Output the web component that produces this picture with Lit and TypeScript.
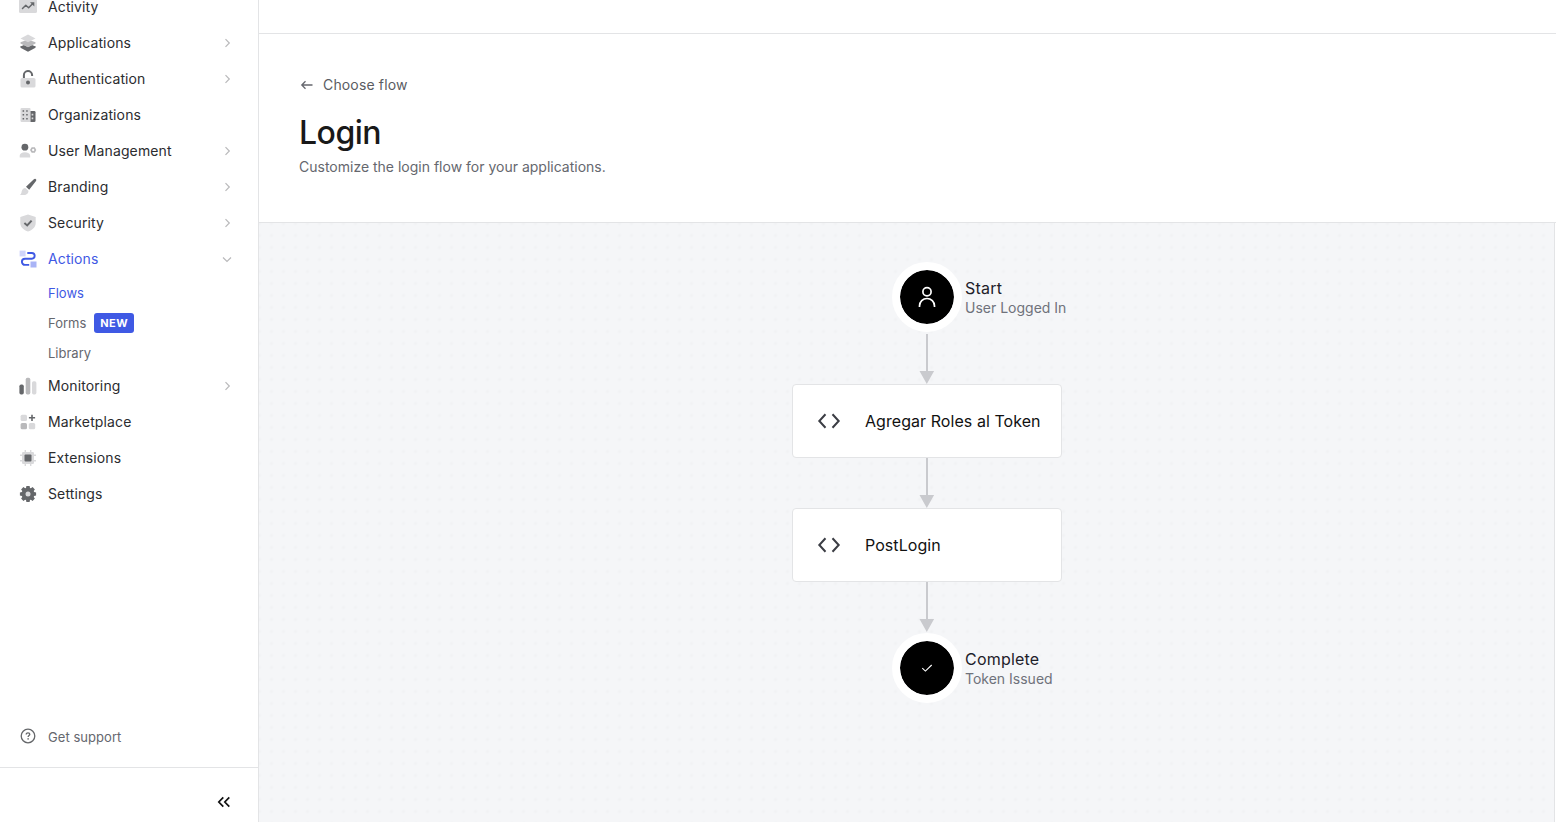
import { LitElement, html, svg, css, nothing } from "lit";
import { customElement } from "lit/decorators.js";
import { classMap } from "lit/directives/class-map.js";

const D = "#65676a", M = "#b9b9bb", L = "#d9d9db";

const icons: Record<string, unknown> = {
  activity: svg`<rect x="0" y="1.3" width="18" height="13.700" rx="1.6" fill="${L}"/>
    <path d="M3.5 10.500 6.8 7.300 9.6 9.800 13.6 5.800" fill="none" stroke="${D}" stroke-width="1.500" stroke-linejoin="round" stroke-linecap="round"/><path d="M11 4.200h4.300v4.300z" fill="${D}"/>`,
  applications: svg`<path d="M1.500 12.100 9 15.500l7.500-3.400v1.700L9 17.700 1.500 13.800z" fill="${D}"/><path d="M1.500 12.600 5 11l4 2 4-2 3.500 1.600L9 17z" fill="${D}"/>
    <path d="M1.500 8.200 9 5.500l7.500 2.700v1.200L9 13.200 1.500 9.400z" fill="${M}"/><path d="M9 .6 16.500 4.400 9 8.300 1.500 4.400z" fill="${L}"/>`,
  authentication: svg`<rect x="1.500" y="8" width="15" height="9.600" rx="1.600" fill="${L}"/><path d="M4.900 8V5.400a4.100 4.100 0 0 1 8.200-.4v1" fill="none" stroke="${D}" stroke-width="2"/><circle cx="9" cy="12.600" r="2" fill="${D}"/>`,
  organizations: svg`<path d="M2.800 2h7.700a1 1 0 0 1 1 1v13H2.800a1.300 1.300 0 0 1-1.300-1.300V3.300A1.300 1.300 0 0 1 2.800 2z" fill="${L}"/><path d="M11.500 5h3.700a1.300 1.300 0 0 1 1.300 1.300v8.400a1.300 1.300 0 0 1-1.300 1.300h-3.700z" fill="${D}"/>
    <path d="M3.600 4.300h1.500v1.500H3.600zM7.200 4.300h1.500v1.500H7.200zM3.600 8.100h1.500v1.500H3.600zM7.200 8.100h1.500v1.500H7.200zM3.600 11.900h1.500v1.500H3.600zM7.200 11.900h1.500v1.500H7.200z" fill="${D}"/><path d="M12.600 7.800h1.700v1.700h-1.700zM12.600 11.500h1.700v1.700h-1.700z" fill="${L}"/>`,
  users: svg`<circle cx="5.900" cy="5.200" r="3.400" fill="${D}"/><path d="M.7 13.800C.7 11.500 3 10.300 5.900 10.300s5.300 1.200 5.300 3.500v1.700H.7z" fill="${L}"/><circle cx="14.200" cy="8" r="1.900" fill="none" stroke="${M}" stroke-width="1.500"/><path d="M11.300 8h1M16.100 8h1M12.800 5.500l.5.900M15.600 5.500l-.5.900M12.800 10.500l.5-.9M15.600 10.500l-.5-.9" stroke="${M}" stroke-width="1.300"/>`,
  branding: svg`<path d="M16.500.9c.9.300 1 1.100.5 2.100l-6.800 8.700-3.200-2.900L14.600 1.500c.7-.6 1.300-.8 1.900-.6z" fill="${D}"/><path d="M6.300 9.900l3.100 2.900c.2 2.500-1.800 4.200-4.300 4.200H.8c1.700-1 1.500-2 1.900-3.700.4-1.900 1.800-3.200 3.600-3.400z" fill="${L}"/>`,
  security: svg`<path d="M9 .6 16.700 3v6c0 4.200-3.400 7.200-7.700 8.600C4.700 16.200 1.300 13.200 1.300 9V3z" fill="${L}"/><path d="M5.400 9.100 8.200 11.400 12.600 6.600" fill="none" stroke="${D}" stroke-width="2"/>`,
  actions: svg`<rect x=".6" y=".6" width="6" height="5.800" fill="#cfd4fa"/><rect x="11.500" y="11.500" width="6" height="6" fill="#a9b4f6"/><path d="M8.300 3h4.500a2.800 2.800 0 0 1 0 5.700H6a3.100 3.100 0 0 0 0 6.200h4.200" fill="none" stroke="#3f59e4" stroke-width="1.900"/>`,
  monitoring: svg`<rect x=".4" y="7.500" width="4.400" height="10" rx="1.700" fill="${D}"/><rect x="6.700" y=".7" width="4.600" height="16.800" rx="1.700" fill="${M}"/><rect x="13" y="4.200" width="4.400" height="13.300" rx="1.700" fill="${L}"/>`,
  marketplace: svg`<rect x="1.600" y="1.700" width="6.400" height="6.400" rx="1.500" fill="${L}"/><rect x="1.600" y="9.900" width="6.400" height="6.400" rx="1.500" fill="${M}"/><rect x="9.800" y="9.900" width="6.400" height="6.400" rx="1.500" fill="${L}"/><path d="M13 1.700v6.200M9.900 4.800h6.200" stroke="${D}" stroke-width="1.600"/>`,
  extensions: svg`<rect x="3" y="3" width="12" height="12" rx="1.300" fill="${L}"/><path d="M6.300 1v16M11.700 1v16M1 6.300h16M1 11.700h16" stroke="${L}" stroke-width="1.400"/><rect x="5.500" y="5.500" width="7" height="7" rx="1" fill="${D}"/>`,
  settings: svg`<path d="M7.400.9h3.200l.4 2 .9.400 1.700-1.200 2.300 2.300-1.200 1.700.4.900 2 .4v3.200l-2 .4-.4.900 1.200 1.700-2.300 2.300-1.700-1.200-.9.400-.4 2H7.400l-.4-2-.9-.4-1.700 1.200-2.300-2.300 1.200-1.700-.4-.9-2-.4V7.400l2-.4.4-.9-1.200-1.700 2.300-2.300 1.700 1.200.9-.4z" fill="${D}"/><circle cx="9" cy="9" r="2.500" fill="${L}"/>`,
  support: svg`<circle cx="9" cy="9" r="6.800" fill="none" stroke="${D}" stroke-width="1.300"/><path d="M7.200 7.400c0-1 .8-1.600 1.800-1.600s1.800.6 1.800 1.500c0 1.300-1.700 1.300-1.700 2.700" fill="none" stroke="${D}" stroke-width="1.300"/><circle cx="9.100" cy="11.900" r=".8" fill="${D}"/>`,
};

interface NavItem { icon: string; label: string; chevron?: boolean; open?: boolean; }

const topItems: NavItem[] = [
  { icon: "activity", label: "Activity" },
  { icon: "applications", label: "Applications", chevron: true },
  { icon: "authentication", label: "Authentication", chevron: true },
  { icon: "organizations", label: "Organizations" },
  { icon: "users", label: "User Management", chevron: true },
  { icon: "branding", label: "Branding", chevron: true },
  { icon: "security", label: "Security", chevron: true },
  { icon: "actions", label: "Actions", chevron: true, open: true },
];
const bottomItems: NavItem[] = [
  { icon: "monitoring", label: "Monitoring", chevron: true },
  { icon: "marketplace", label: "Marketplace" },
  { icon: "extensions", label: "Extensions" },
  { icon: "settings", label: "Settings" },
];

@customElement("side-nav")
export class SideNav extends LitElement {
  static styles = css`
    :host { display: flex; flex-direction: column; box-sizing: border-box; width: 259px; height: 100%; border-right: 1px solid #e3e4e6; background: #fff; color: #2b2c2f; font-size: 14px; }
    .nav { flex: 1; min-height: 0; margin-top: -11px; }
    .item { display: flex; align-items: center; height: 36px; padding: 0 22px 0 19px; letter-spacing: 0.12px; }
    .item svg { flex: none; }
    .label { flex: 1; margin-left: 11px; }
    .item .label { padding-bottom: 2px; }
    .open { color: #3f59e4; }
    .sub { display: grid; grid-template-rows: repeat(3, 1fr); height: 91px; padding-left: 48px; font-size: 13px; color: #65676e; }
    .subitem { display: flex; align-items: center; gap: 8px; padding-top: 1px; }
    .active { color: #3f59e4; }
    .badge { display: flex; align-items: center; height: 20px; box-sizing: border-box; padding: 0 6px; border-radius: 3px; background: #3f59e4; color: #fff; font-size: 11px; font-weight: 700; letter-spacing: 0.4px; }
    .support { display: flex; align-items: center; height: 36px; padding-left: 19px; margin-bottom: 13px; font-size: 13px; color: #65676e; letter-spacing: 0.05px; }
    .support .label { padding-top: 1px; }
    .foot { display: flex; align-items: center; justify-content: flex-end; box-sizing: border-box; height: 55px; padding: 14px 27px 0 0; border-top: 1px solid #e3e4e6; }
    .foot svg { display: block; }
  `;

  private item(i: NavItem) {
    return html`<div class=${classMap({ item: true, open: !!i.open })}>
      <svg width="18" height="18" viewBox="0 0 18 18">${icons[i.icon]}</svg>
      <span class="label">${i.label}</span>
      ${i.chevron
        ? html`<svg width="18" height="18" viewBox="0 0 18 18" fill="none" stroke="#b9b9bb" stroke-width="1.2">
            <path d=${i.open ? "M5 7.500 9 11.500 13 7.500" : "M7.500 5.200 11.300 9 7.500 12.800"} /></svg>`
        : nothing}
    </div>`;
  }

  render() {
    return html`
      <div class="nav">
        ${topItems.map((i) => this.item(i))}
        <div class="sub">
          <div class="subitem active">Flows</div>
          <div class="subitem">Forms <span class="badge">NEW</span></div>
          <div class="subitem">Library</div>
        </div>
        ${bottomItems.map((i) => this.item(i))}
      </div>
      <div class="support"><svg width="18" height="18" viewBox="0 0 18 18">${icons.support}</svg><span class="label">Get support</span></div>
      <div class="foot"><svg width="14" height="12" viewBox="0 0 14 12" fill="none" stroke="#111" stroke-width="1.700"><path d="M6.300 1.300 1.800 6l4.500 4.700M12.300 1.300 7.800 6l4.500 4.700" /></svg></div>
    `;
  }
}

@customElement("flow-canvas")
export class FlowCanvas extends LitElement {
  static styles = css`
    :host { display: flex; flex-direction: column; align-items: center; box-sizing: border-box; padding: 39px 0 0 41px; border-right: 1px solid #e3e4e6; background-color: #f5f6f8; background-image: radial-gradient(circle at 6px 6px, #f1f2f4 1.2px, transparent 2.1px); background-size: 12px 12px; background-position: 6.500px 6.500px; }
    .terminal { display: grid; grid-template-columns: 1fr 70px 1fr; align-items: center; width: 400px; height: 70px; }
    .disc { grid-column: 2; box-sizing: border-box; display: flex; align-items: center; justify-content: center; width: 70px; height: 70px; border: 8px solid #fff; border-radius: 50%; background: #000 padding-box; }
    .text { padding: 2px 0 0 3px; white-space: nowrap; }
    .title { font-size: 16px; line-height: 20px; color: #1e212a; letter-spacing: 0.2px; }
    .note { font-size: 14px; line-height: 20px; color: #6f727b; }
    .arrow { display: block; }
    .start { margin-bottom: 2px; }
    .end { margin-top: 1px; }
    .card { display: flex; align-items: center; box-sizing: border-box; width: 270px; height: 74px; padding-left: 24px; gap: 24px; border: 1px solid #e3e4e6; border-radius: 4px; background: #fff; font-size: 16px; color: #111; letter-spacing: 0.06px; white-space: nowrap; }
  `;

  private arrow() {
    return html`<svg class="arrow" width="16" height="50" viewBox="0 0 16 50" fill="#c9cace"><path d="M7 0h2v38H7zM.5 37h14.600L7.800 50z" /></svg>`;
  }

  private card(name: string) {
    return html`<div class="card"><svg width="24" height="24" viewBox="0 0 24 24" fill="none" stroke="#3b3d44" stroke-width="2"><path d="M8.500 5.300 2.300 12l6.200 6.700M15.500 5.300 21.700 12l-6.200 6.700" /></svg><span>${name}</span></div>`;
  }

  render() {
    return html`
      <div class="terminal start">
        <div class="disc"><svg width="24" height="24" viewBox="0 0 24 24" fill="none" stroke="#fff" stroke-width="1.700"><circle cx="12" cy="6.700" r="4.100" /><path d="M4.500 22v-1a7.500 7.500 0 0 1 15 0v1" /></svg></div>
        <div class="text"><div class="title">Start</div><div class="note">User Logged In</div></div>
      </div>
      ${this.arrow()}${this.card("Agregar Roles al Token")}${this.arrow()}${this.card("PostLogin")}${this.arrow()}
      <div class="terminal end">
        <div class="disc"><svg width="12" height="12" viewBox="0 0 12 12" fill="none" stroke="#fff" stroke-width="1.100"><path d="M1.300 6.200 4.400 9.100 10.700 3" /></svg></div>
        <div class="text"><div class="title">Complete</div><div class="note">Token Issued</div></div>
      </div>
    `;
  }
}

@customElement("app-root")
export class AppRoot extends LitElement {
  static styles = css`
    :host { display: flex; width: 100%; height: 100vh; overflow: hidden; background: #fff; font-family: Inter, "Liberation Sans", sans-serif; }
    side-nav { flex: none; }
    .main { flex: 1; min-width: 0; display: flex; flex-direction: column; }
    .topbar { box-sizing: border-box; height: 34px; border-bottom: 1px solid #e3e4e6; }
    .head { box-sizing: border-box; height: 189px; padding: 41px 40px 0; border-bottom: 1px solid #e3e4e6; }
    .back { display: flex; align-items: center; gap: 8px; height: 20px; font-size: 14px; color: #5a5c62; letter-spacing: 0.15px; }
    .back span { padding-bottom: 2px; }
    .heading { margin: 18px 0 0; font-size: 32px; line-height: 40px; font-weight: 500; color: #191919; letter-spacing: -0.5px; }
    .intro { margin: 4px 0 0; font-size: 14px; line-height: 20px; color: #65676e; }
    flow-canvas { flex: 1; margin-right: 1px; }
  `;

  render() {
    return html`
      <side-nav></side-nav>
      <div class="main">
        <div class="topbar"></div>
        <div class="head">
          <div class="back"><svg width="16" height="16" viewBox="0 0 16 16" fill="none" stroke="#65676e" stroke-width="1.300"><path d="M13.500 8H3M6.500 4.300 2.800 8l3.700 3.700" /></svg><span>Choose flow</span></div>
          <h1 class="heading">Login</h1>
          <p class="intro">Customize the login flow for your applications.</p>
        </div>
        <flow-canvas></flow-canvas>
      </div>
    `;
  }
}
